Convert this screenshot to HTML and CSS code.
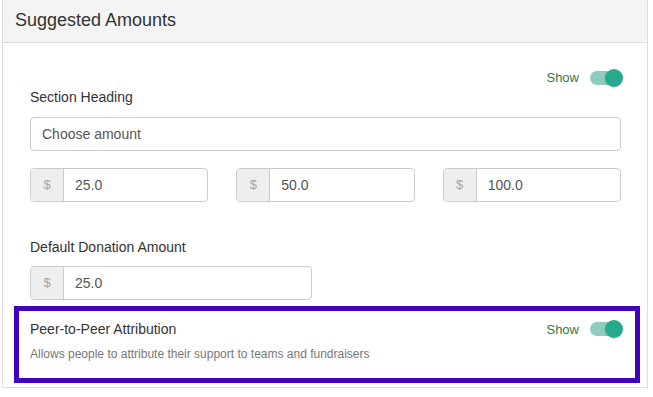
FILE: index.html
```html
<!DOCTYPE html>
<html>
<head>
<meta charset="utf-8">
<link rel="stylesheet" href="styles.css">
</head>
<body>
<div class="panel">
  <div class="panel-heading">Suggested Amounts</div>
  <div class="panel-body">
    <div class="show-row">
      <span class="show-label">Show</span>
      <span class="toggle"><span class="track"></span><span class="knob"></span></span>
    </div>
    <label class="field-label">Section Heading</label>
    <div class="text-input">Choose amount</div>
    <div class="amounts">
      <div class="input-group"><span class="addon">$</span><span class="value">25.0</span></div>
      <div class="input-group"><span class="addon">$</span><span class="value">50.0</span></div>
      <div class="input-group"><span class="addon">$</span><span class="value">100.0</span></div>
    </div>
    <label class="field-label default-label">Default Donation Amount</label>
    <div class="input-group default-group"><span class="addon">$</span><span class="value">25.0</span></div>
    <div class="highlight">
      <div class="p2p-row">
        <span class="p2p-title">Peer-to-Peer Attribution</span>
        <span class="show-wrap">
          <span class="show-label">Show</span>
          <span class="toggle"><span class="track"></span><span class="knob"></span></span>
        </span>
      </div>
      <div class="p2p-desc">Allows people to attribute their support to teams and fundraisers</div>
    </div>
  </div>
</div>
</body>
</html>
```
FILE: styles.css
```css
* { box-sizing: border-box; }
body {
  margin: 0;
  background: #fff;
  font-family: "Liberation Sans", Arial, sans-serif;
  color: #333;
}
.panel {
  margin-left: 2px;
  width: 646px;
  border: 1px solid #ddd;
  border-top: none;
}
.panel-heading {
  background: #f4f4f4;
  border-bottom: 1px solid #ddd;
  height: 43px;
  padding: 10px 12px 0;
  font-size: 18px;
  line-height: 20px;
  color: #333;
}
.panel-body {
  padding: 25px 26px 4px 27px;
}
.show-row {
  display: flex;
  justify-content: flex-end;
  align-items: center;
  height: 19px;
  margin-right: -2px;
}
.show-label {
  font-size: 13px;
  color: #3c763d;
  margin-right: 11px;
}
.toggle {
  position: relative;
  display: inline-block;
  width: 33px;
  height: 18px;
}
.track {
  position: absolute;
  left: 0;
  top: 2px;
  width: 28px;
  height: 14px;
  border-radius: 7px;
  background: #8ecdbd;
}
.knob {
  position: absolute;
  right: 0;
  top: 0;
  width: 18px;
  height: 18px;
  border-radius: 50%;
  background: #27a98e;
  box-shadow: 0 1px 2px rgba(0,0,0,0.15);
}
.field-label {
  display: block;
  font-size: 14px;
  line-height: 20px;
  margin-bottom: 10px;
  color: #333;
}
.text-input {
  height: 34px;
  border: 1px solid #ccc;
  border-radius: 4px;
  padding: 0 11px;
  font-size: 14px;
  line-height: 32px;
  color: #555;
}
.amounts {
  display: grid;
  grid-template-columns: repeat(3, 1fr);
  column-gap: 28px;
  margin-top: 17px;
}
.input-group {
  display: flex;
  height: 34px;
  border: 1px solid #ccc;
  border-radius: 4px;
  overflow: hidden;
  font-size: 14px;
}
.addon {
  width: 33px;
  background: #eee;
  border-right: 1px solid #ccc;
  color: #a5a5a5;
  text-align: center;
  line-height: 32px;
  font-size: 13px;
}
.value {
  flex: 1;
  padding-left: 11px;
  line-height: 32px;
  color: #555;
}
.default-label {
  margin-top: 35px;
  margin-bottom: 9px;
}
.default-group {
  width: 282px;
}
.highlight {
  margin: 6px -19px 0 -16px;
  border: 5px solid #3f03bf;
  padding: 8px 12px 15px 11px;
}
.p2p-row {
  display: flex;
  justify-content: space-between;
  align-items: center;
  height: 20px;
}
.p2p-title {
  font-size: 14px;
  color: #333;
}
.show-wrap {
  display: flex;
  align-items: center;
}
.p2p-desc {
  margin-top: 7px;
  font-size: 12px;
  line-height: 17px;
  color: #777;
}
```
